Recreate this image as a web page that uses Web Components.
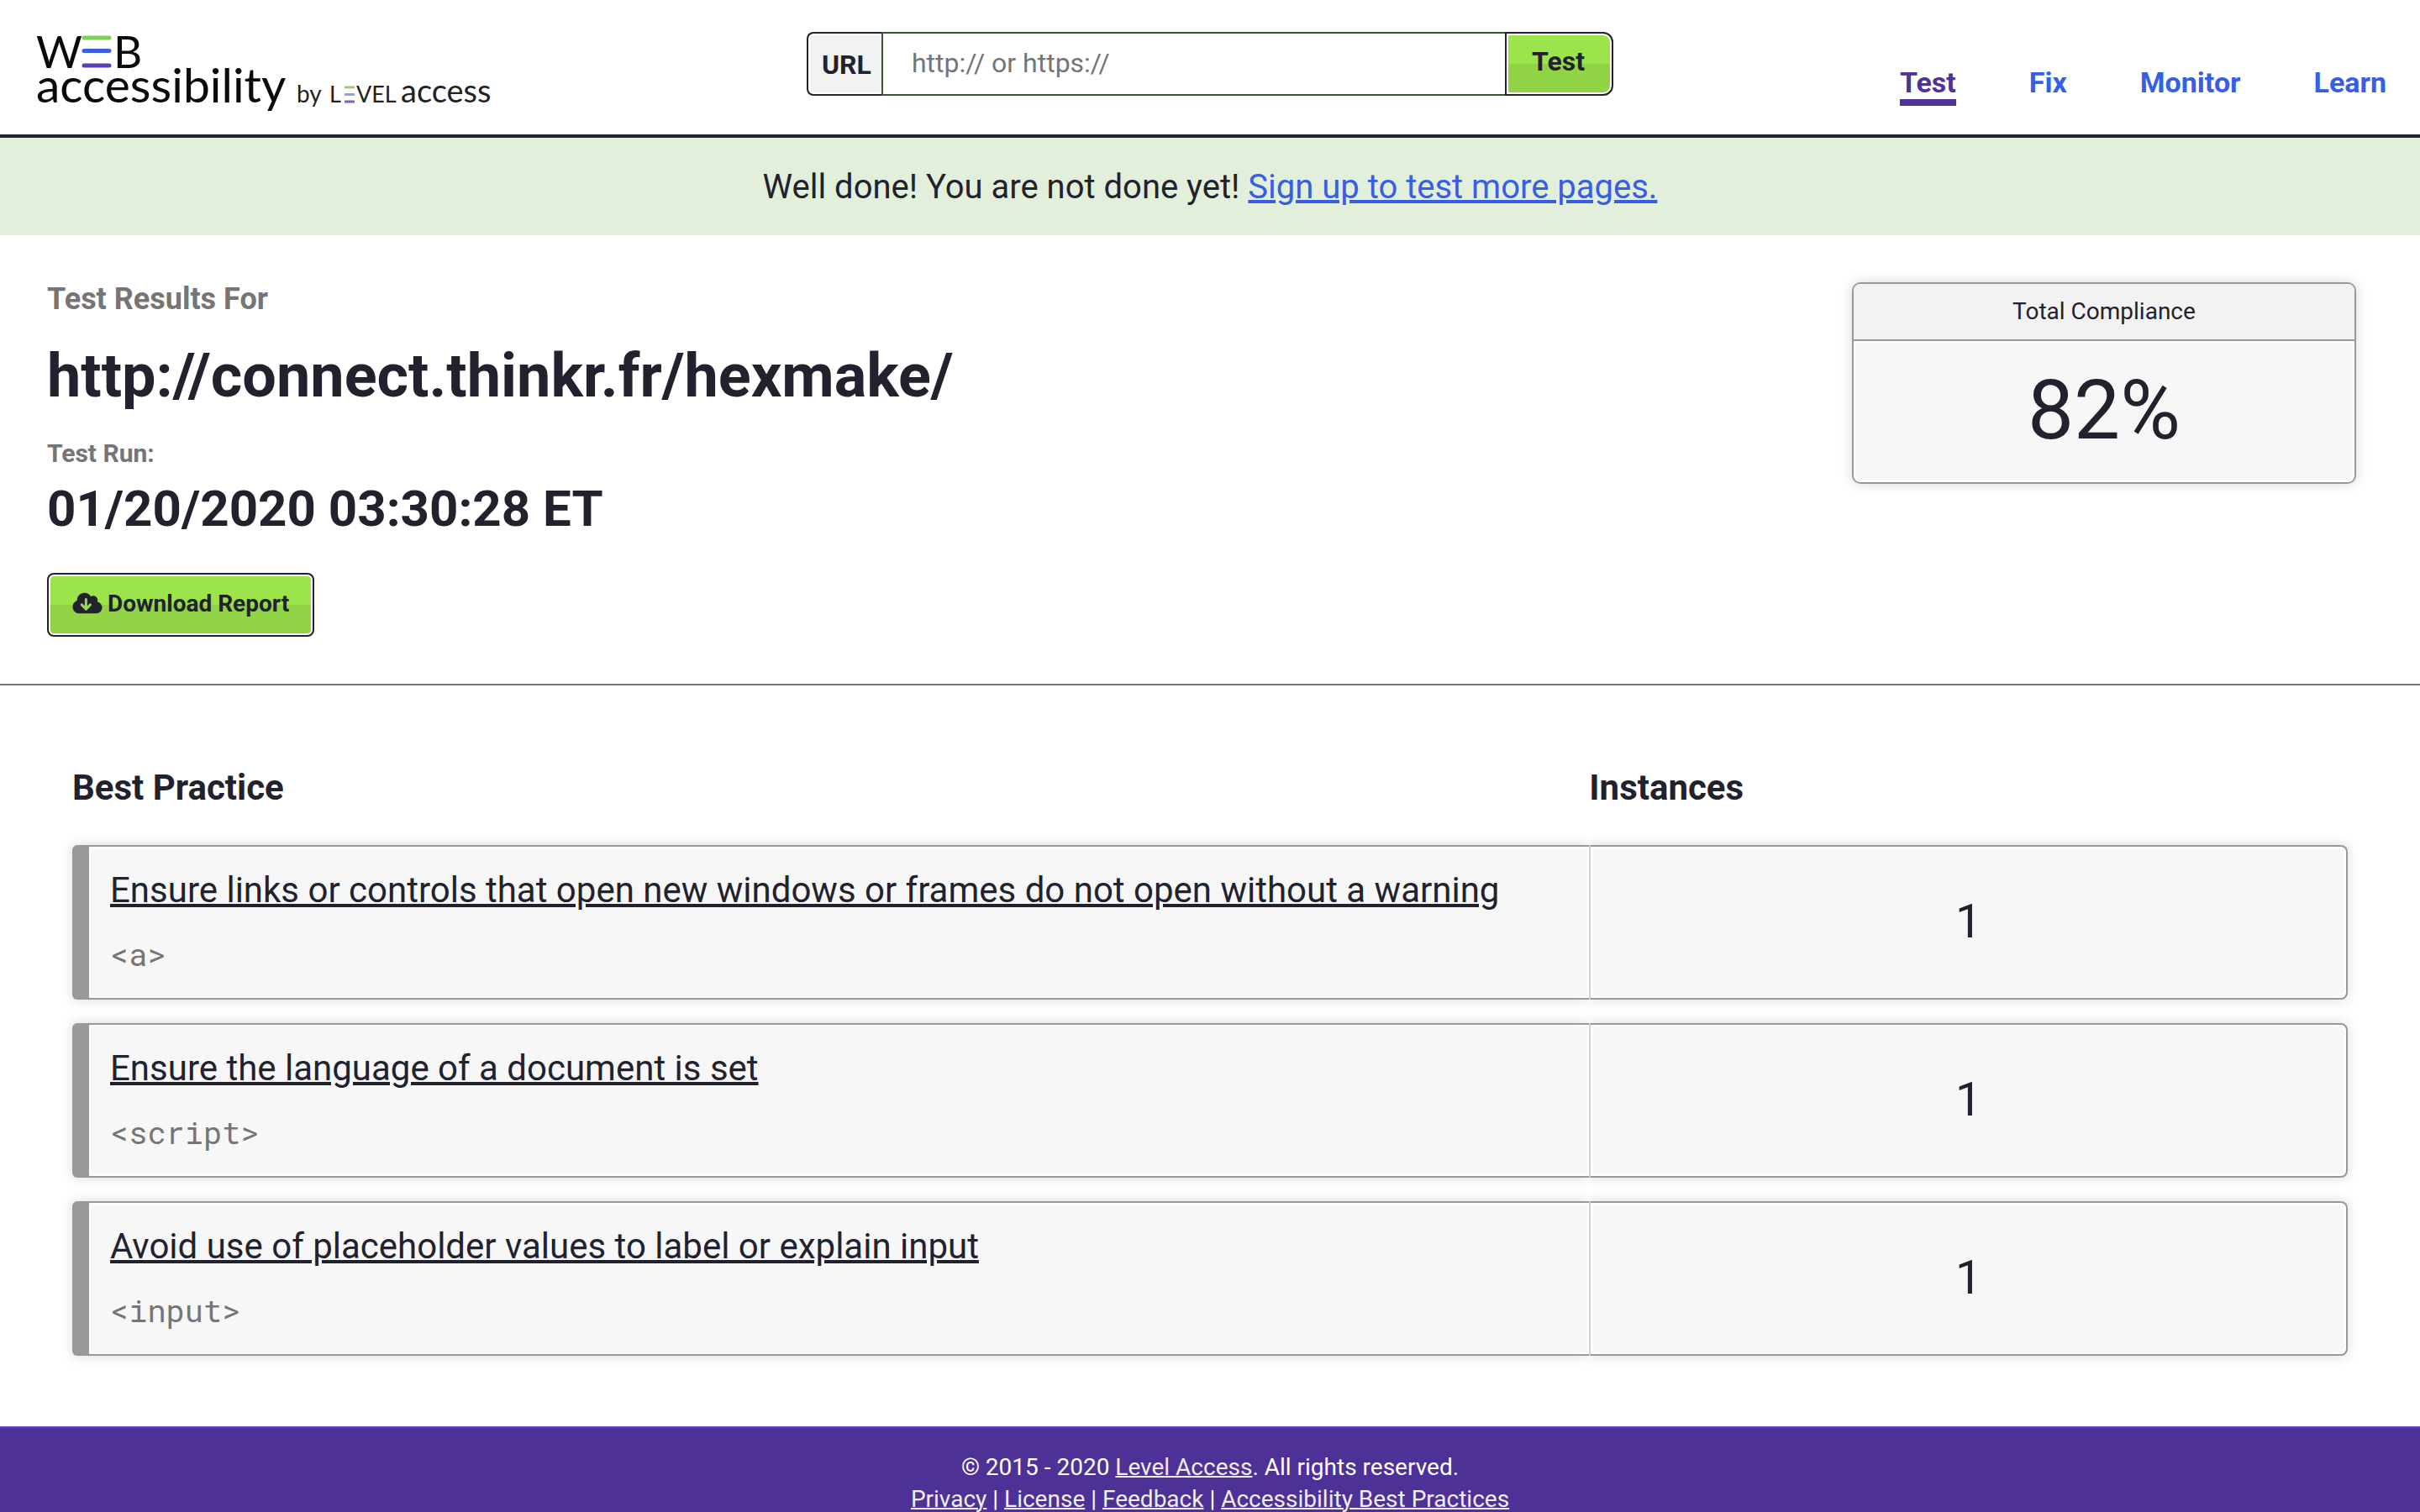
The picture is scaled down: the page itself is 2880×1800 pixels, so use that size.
<!DOCTYPE html>
<html lang="en">
<head>
<meta charset="utf-8">
<title>Web Accessibility by Level Access</title>
<style>
  :root { --ink: #22222e; --muted: #757575; --link: #365fe5; --purple: #4f3198; --rule: #999; --panel: #f7f7f7; --head: #f2f2f2; }
  body { margin: 0; background: #fff; color: var(--ink); font-family: Roboto, "Liberation Sans", sans-serif; font-size: 32px; }
</style>
</head>
<body>
<wa-header></wa-header>
<wa-banner>Well done! You are not done yet! <a slot="action" href="#signup">Sign up to test more pages.</a></wa-banner>
<main>
  <wa-summary url="http://connect.thinkr.fr/hexmake/" run="01/20/2020 03:30:28 ET">
    <wa-score label="Total Compliance">82%</wa-score>
  </wa-summary>
  <wa-results></wa-results>
</main>
<wa-footer></wa-footer>

<script>
  const define = (name, render) => customElements.define(name, class extends HTMLElement {
    constructor() {
      super();
      const template = document.createElement('template');
      template.innerHTML = render(this);
      this.attachShadow({ mode: 'open' }).append(template.content.cloneNode(true));
    }
  });

  const buttonCss = `
    button { box-sizing: border-box; height: 76px; border: 2px solid var(--ink); color: var(--ink);
      background: linear-gradient(#9ce34c 50%, #91d547 50%); box-shadow: inset 0 0 0 2px #fff;
      font-family: inherit; font-weight: 700; }`;

  define('wa-logo', () => `
    <style>
      :host { display: block; }
      svg { display: block; overflow: visible; }
      text { font-family: Lato, "Open Sans", sans-serif; font-weight: 400; fill: #0a0a0a; }
      .by { fill: #222; }
    </style>
    <svg width="548" height="98" viewBox="0 0 548 98" role="img" aria-label="Web accessibility by Level Access">
      <text x="3" y="43" font-size="53">W</text>
      <g stroke-width="5" stroke-linecap="round">
        <path d="M60 7H90" stroke="#7bd058"/><path d="M60 22.500H90" stroke="#3c5fe0"/><path d="M60 40H90" stroke="#5a3db8"/>
      </g>
      <text x="95" y="43" font-size="53">B</text>
      <text x="3" y="84" font-size="57">accessibility</text>
      <text class="by" x="313" y="84" font-size="28">by</text>
      <text class="by" x="352" y="84" font-size="27">L</text>
      <g stroke-width="3"><path d="M370 66H382" stroke="#9ccb7c"/><path d="M370 74.500H382" stroke="#8fa3d8"/><path d="M370 83H382" stroke="#7d62b8"/></g>
      <text class="by" x="384" y="84" font-size="27">VEL</text>
      <text class="by" x="437" y="84" font-size="38">access</text>
    </svg>`);

  define('wa-search', () => `
    <style>
      :host { display: block; }
      form { display: flex; height: 76px; }
      label { box-sizing: border-box; display: flex; align-items: center; padding: 2px 12px 0 16px; border: 2px solid var(--ink); border-right: 0;
        border-radius: 8px 0 0 8px; background: var(--head); box-shadow: inset 2px 0 #fff, inset 0 2px #fff, inset 0 -2px #fff; font-weight: 700; }
      input { box-sizing: border-box; flex: 1; min-width: 0; border: 2px solid #38532f; border-right: 0; padding: 0 34px 2px; font-family: inherit; font-size: 32px; color: var(--ink); background: #fff; }
      input::placeholder { color: var(--muted); opacity: 1; }
      ${buttonCss}
      button { border-radius: 0 12px 12px 0; padding: 0 32px 6px 30px; font-size: 32px; }
    </style>
    <form>
      <label for="url">URL</label>
      <input id="url" type="text" placeholder="http:// or https://">
      <button type="button">Test</button>
    </form>`);

  define('wa-nav', () => `
    <style>
      :host { display: block; }
      nav { display: flex; justify-content: flex-end; gap: 87px; }
      a { color: var(--link); font-size: 34px; line-height: 40px; font-weight: 700; text-decoration: none; border-bottom: 8px solid transparent; }
      a[aria-current] { color: var(--purple); border-color: currentColor; }
    </style>
    <nav aria-label="Main"><a href="#test" aria-current="page">Test</a><a href="#fix">Fix</a><a href="#monitor">Monitor</a><a href="#learn">Learn</a></nav>`);

  define('wa-header', () => `
    <style>
      :host { display: block; border-bottom: 4px solid var(--ink); }
      header { display: grid; grid-template-columns: 1fr 33.3333vw 1fr; padding: 38px 40px 24px; }
      wa-nav { align-self: end; padding-bottom: 10px; }
    </style>
    <header><wa-logo></wa-logo><wa-search></wa-search><wa-nav></wa-nav></header>`);

  define('wa-banner', () => `
    <style>
      :host { display: block; padding: 35px 56px 33px; background: #e2efdb; text-align: center; font-size: 40px; line-height: 48px; }
      ::slotted(a) { color: var(--link); text-decoration-thickness: 4px; }
    </style>
    <slot></slot><slot name="action"></slot>`);

  define('wa-score', el => `
    <style>
      :host { display: block; border: 2px solid var(--rule); border-radius: 10px; background: var(--panel); text-align: center; box-shadow: 0 0 16px rgba(0,0,0,.15); overflow: hidden; }
      h2 { margin: 0; padding: 13px 0; border-bottom: 2px solid var(--rule); background: var(--head); font-size: 28px; line-height: 40px; font-weight: 400; }
      p { margin: 0; padding: 27px 0 29px; font-size: 98px; line-height: 112px; box-shadow: inset 0 0 0 2px #fff; border-radius: 0 0 8px 8px; }
    </style>
    <h2>${el.getAttribute('label')}</h2><p><slot></slot></p>`);

  define('wa-download', () => `
    <style>
      :host { display: block; }
      ${buttonCss}
      button { display: flex; align-items: center; gap: 6px; border-radius: 8px; padding: 0 28px 4px; font-size: 28px; }
      svg { width: 36px; height: 28px; fill: currentColor; }
    </style>
    <button type="button">
      <svg viewBox="0 0 640 512" aria-hidden="true">
        <path d="M537.6 226.600c4.100-10.700 6.400-22.400 6.400-34.600 0-53-43-96-96-96-19.700 0-38.100 6-53.300 16.200C367 64.200 315.300 32 256 32c-88.400 0-160 71.600-160 160 0 2.700.1 5.400.2 8.100C40.200 219.800 0 273.200 0 336c0 79.500 64.500 144 144 144h368c70.700 0 128-57.300 128-128 0-61.900-44-113.600-102.400-125.400z"/>
        <path d="M290 172V380M196 290L290 386L384 290" fill="none" stroke="#97dc49" stroke-width="54" stroke-linecap="round" stroke-linejoin="round"/>
      </svg>
      Download Report
    </button>`);

  define('wa-summary', el => `
    <style>
      :host { display: block; border-bottom: 2px solid var(--muted); }
      section { display: grid; grid-template-columns: 1fr 600px; align-items: start; padding: 56px 76px 56px 56px; }
      h1, h2, p { margin: 0; font-weight: 700; }
      p { color: var(--muted); font-size: 36px; line-height: 40px; }
      p.run { font-size: 30px; }
      h1 { font-size: 72px; line-height: 88px; margin: 28px 0; }
      h2 { font-size: 60px; line-height: 76px; margin: 8px 0 38px; }
    </style>
    <section>
      <div>
        <p>Test Results For</p><h1>${el.getAttribute('url')}</h1>
        <p class="run">Test Run:</p><h2>${el.getAttribute('run')}</h2>
        <wa-download></wa-download>
      </div>
      <slot></slot>
    </section>`);

  const practices = [
    ['Ensure links or controls that open new windows or frames do not open without a warning', '&lt;a&gt;', 1],
    ['Ensure the language of a document is set', '&lt;script&gt;', 1],
    ['Avoid use of placeholder values to label or explain input', '&lt;input&gt;', 1],
  ];

  define('wa-results', () => `
    <style>
      :host { display: block; padding: 56px 86px; }
      table { width: 100%; table-layout: fixed; border-collapse: separate; border-spacing: 0 28px; }
      col.practice { width: 66.6667%; }
      th { padding: 14px 0 16px; text-align: left; font-size: 42px; line-height: 48px; }
      td { padding: 28px 25px; border: 2px solid var(--rule); background: var(--panel); box-shadow: inset 0 0 0 2px #fff, 0 0 16px rgba(0,0,0,.15); }
      td:first-child { border-left-width: 20px; border-right: 0; border-radius: 6px 0 0 6px; clip-path: inset(-16px 0 -16px -16px); }
      td:last-child { padding: 0 0 2px; border-left-color: #ccc; border-radius: 0 8px 8px 0; text-align: center; font-size: 56px; line-height: 64px; clip-path: inset(-16px -16px -16px 0); }
      a { display: block; width: fit-content; color: inherit; font-size: 42px; line-height: 48px; text-decoration-thickness: 4px; }
      code { display: block; margin-top: 28px; color: var(--muted); font-family: "Roboto Mono", "Liberation Mono", monospace; font-size: 37px; line-height: 48px; }
    </style>
    <table>
      <colgroup><col class="practice"><col></colgroup>
      <thead><tr><th scope="col">Best Practice</th><th scope="col">Instances</th></tr></thead>
      <tbody>${practices.map(([name, tag, count]) => `<tr><td><a href="#practice">${name}</a><code>${tag}</code></td><td>${count}</td></tr>`).join('')}</tbody>
    </table>`);

  define('wa-footer', () => `
    <style>
      :host { display: block; border-top: 2px solid #6340c0; background: #4e3197; color: #fff; text-align: center; font-size: 28px; line-height: 38px; }
      footer { padding: 28px 56px; }
      p { margin: 0; }
      a { color: #eee; text-decoration-thickness: 2px; }
    </style>
    <footer>
      <p>© 2015 - 2020 <a href="#company">Level Access</a>. All rights reserved.</p>
      <p><a href="#privacy">Privacy</a> | <a href="#license">License</a> | <a href="#feedback">Feedback</a> | <a href="#practices">Accessibility Best Practices</a></p>
    </footer>`);
</script>
</body>
</html>
